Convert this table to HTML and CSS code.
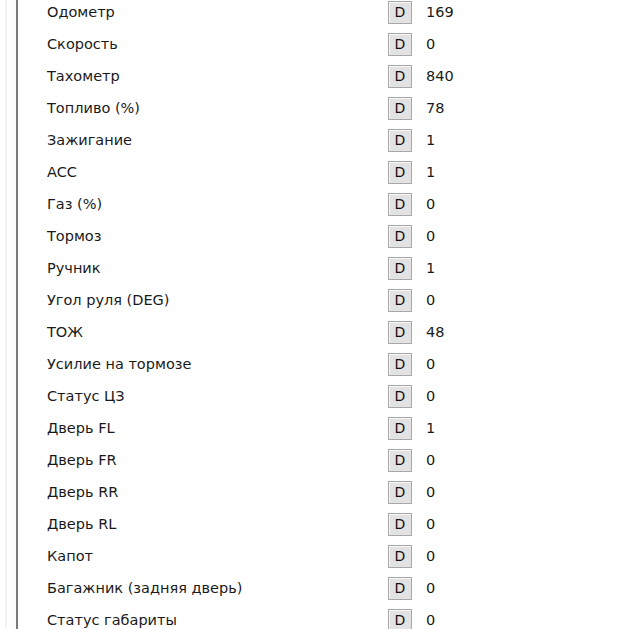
FILE: index.html
```html
<!DOCTYPE html>
<html lang="ru">
<head>
<meta charset="utf-8">
<link rel="stylesheet" href="styles.css">
</head>
<body>
<div class="frame">
  <div class="gutter"></div>
  <div class="list">
    <div class="row"><span class="label">Одометр</span><span class="btn">D</span><span class="val">169</span></div>
    <div class="row"><span class="label">Скорость</span><span class="btn">D</span><span class="val">0</span></div>
    <div class="row"><span class="label">Тахометр</span><span class="btn">D</span><span class="val">840</span></div>
    <div class="row"><span class="label">Топливо (%)</span><span class="btn">D</span><span class="val">78</span></div>
    <div class="row"><span class="label">Зажигание</span><span class="btn">D</span><span class="val">1</span></div>
    <div class="row"><span class="label">ACC</span><span class="btn">D</span><span class="val">1</span></div>
    <div class="row"><span class="label">Газ (%)</span><span class="btn">D</span><span class="val">0</span></div>
    <div class="row"><span class="label">Тормоз</span><span class="btn">D</span><span class="val">0</span></div>
    <div class="row"><span class="label">Ручник</span><span class="btn">D</span><span class="val">1</span></div>
    <div class="row"><span class="label">Угол руля (DEG)</span><span class="btn">D</span><span class="val">0</span></div>
    <div class="row"><span class="label">ТОЖ</span><span class="btn">D</span><span class="val">48</span></div>
    <div class="row"><span class="label">Усилие на тормозе</span><span class="btn">D</span><span class="val">0</span></div>
    <div class="row"><span class="label">Статус ЦЗ</span><span class="btn">D</span><span class="val">0</span></div>
    <div class="row"><span class="label">Дверь FL</span><span class="btn">D</span><span class="val">1</span></div>
    <div class="row"><span class="label">Дверь FR</span><span class="btn">D</span><span class="val">0</span></div>
    <div class="row"><span class="label">Дверь RR</span><span class="btn">D</span><span class="val">0</span></div>
    <div class="row"><span class="label">Дверь RL</span><span class="btn">D</span><span class="val">0</span></div>
    <div class="row"><span class="label">Капот</span><span class="btn">D</span><span class="val">0</span></div>
    <div class="row"><span class="label">Багажник (задняя дверь)</span><span class="btn">D</span><span class="val">0</span></div>
    <div class="row"><span class="label">Статус габариты</span><span class="btn">D</span><span class="val">0</span></div>
  </div>
</div>
</body>
</html>
```
FILE: styles.css
```css
html, body {
  margin: 0;
  padding: 0;
  background: #ffffff;
  overflow: hidden;
}
body {
  font-family: "DejaVu Sans", "Liberation Sans", sans-serif;
  font-size: 14.5px;
  color: #1a1a1a;
}
.frame {
  display: flex;
  height: 629px;
  overflow: hidden;
}
.gutter {
  flex: none;
  width: 18px;
  box-sizing: border-box;
  background: linear-gradient(to right, #ffffff 0, #ffffff 5px, #e8e8e8 6px, #ffffff 7px, #fbfbfb 100%);
  border-right: 2px solid #7c7c7c;
}
.list {
  display: flex;
  flex-direction: column;
  margin-top: -4px;
  padding-left: 29px;
}
.row {
  flex: none;
  height: 32px;
  display: flex;
  align-items: center;
}
.label {
  width: 341px;
  white-space: nowrap;
}
.btn {
  width: 24px;
  height: 23px;
  box-sizing: border-box;
  border: 1px solid #a8a8a8;
  background: #e2e2e2;
  box-shadow: inset 1px 1px 0 #f6f6f6;
  display: flex;
  align-items: center;
  justify-content: center;
  font-size: 14px;
  color: #111;
}
.val {
  margin-left: 14px;
}
```
